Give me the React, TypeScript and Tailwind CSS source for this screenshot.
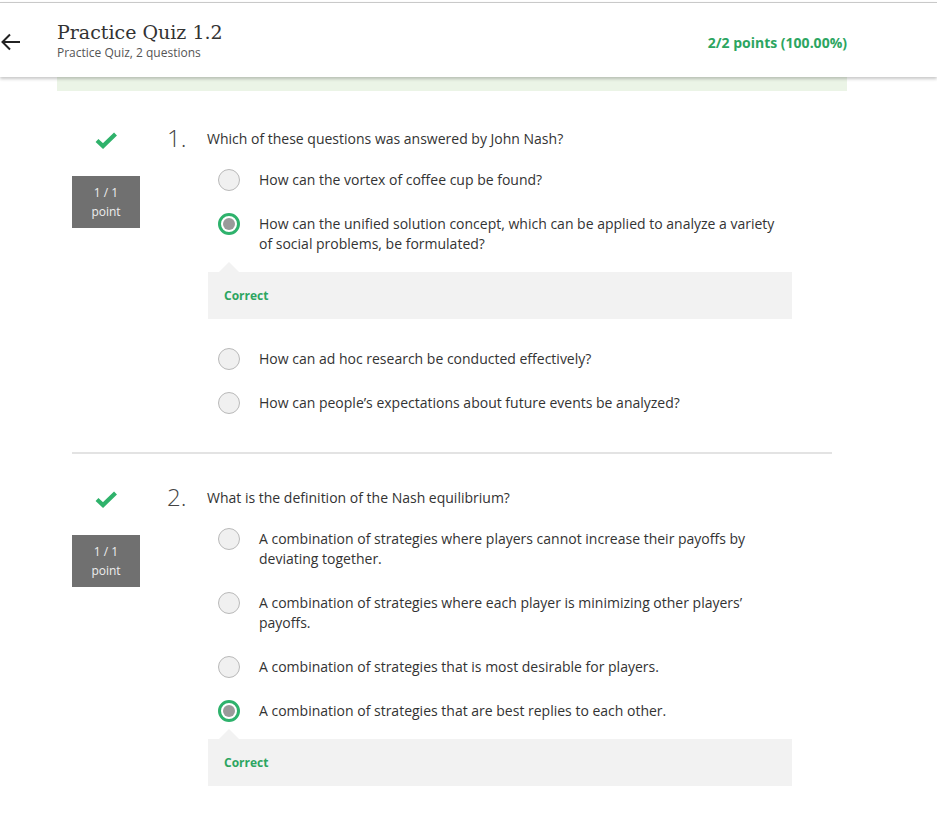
import React from 'react'

type Option = { text: string; selected?: boolean; correct?: boolean }

type Question = { num: number; title: string; options: Option[] }

const QUESTIONS: Question[] = [
  {
    num: 1,
    title: 'Which of these questions was answered by John Nash?',
    options: [
      { text: 'How can the vortex of coffee cup be found?' },
      {
        text: 'How can the unified solution concept, which can be applied to analyze a variety of social problems, be formulated?',
        selected: true,
        correct: true,
      },
      { text: 'How can ad hoc research be conducted effectively?' },
      { text: 'How can people\u2019s expectations about future events be analyzed?' },
    ],
  },
  {
    num: 2,
    title: 'What is the definition of the Nash equilibrium?',
    options: [
      { text: 'A combination of strategies where players cannot increase their payoffs by deviating together.' },
      { text: 'A combination of strategies where each player is minimizing other players\u2019 payoffs.' },
      { text: 'A combination of strategies that is most desirable for players.' },
      { text: 'A combination of strategies that are best replies to each other.', selected: true, correct: true },
    ],
  },
]

function Check() {
  return (
    <svg width="24" height="18" viewBox="0 0 24 18" className="block mx-auto">
      <path d="M3 9.5 L9 15 L21.5 3" fill="none" stroke="#2fb26b" strokeWidth="4.2" strokeLinecap="butt" strokeLinejoin="miter" />
    </svg>
  )
}

function Radio({ selected }: { selected?: boolean }) {
  if (selected) {
    return (
      <span className="-my-[1px] w-[22px] h-[22px] shrink-0 rounded-full border-[3px] border-[#2eb26c] bg-white flex items-center justify-center">
        <span className="w-[12px] h-[12px] rounded-full bg-[#9a9a9a]" />
      </span>
    )
  }
  return <span className="-my-[1px] w-[22px] h-[22px] shrink-0 rounded-full border border-[#b9b9b9] bg-[#f0f0f0]" />
}

function Feedback({ last }: { last: boolean }) {
  return (
    <div className={`relative mt-[18px] ${last ? '' : 'mb-[30px]'} ml-[1px] w-[584px] h-[47px] bg-[#f2f2f2] flex items-center pl-[16px]`}>
      <span className="absolute -top-[10px] left-[11px] w-0 h-0 border-l-[10px] border-r-[10px] border-b-[10px] border-l-transparent border-r-transparent border-b-[#f2f2f2]" />
      <span className="text-[12px] font-bold text-[#2ca561]">Correct</span>
    </div>
  )
}

function QuestionBlock({ q }: { q: Question }) {
  return (
    <div className="flex">
      <div className="w-[68px] shrink-0 pt-[4px]">
        <Check />
        <div className="mt-[27px] h-[52px] bg-[#707070] text-[#eeeeee] text-[12px] leading-[19px] flex flex-col items-center justify-center">
          <span>1 / 1</span>
          <span>point</span>
        </div>
      </div>
      <div className="ml-[27px]">
        <div className="flex items-center h-[22px]">
          <span className="w-[40px] text-[24px] font-light text-[#444] leading-[22px]">{q.num}.</span>
          <span className="text-[14px] text-[#333]">{q.title}</span>
        </div>
        <div className="mt-[21px] ml-[40px]">
          {q.options.map((o, i) => (
            <div key={i}>
              <div className={`flex items-start pl-[11px] ${i > 0 && !q.options[i - 1].correct ? 'mt-[24px]' : ''}`}>
                <Radio selected={o.selected} />
                <p className="ml-[19px] w-[530px] text-[14px] leading-[20px] text-[#333]">{o.text}</p>
              </div>
              {o.correct && <Feedback last={i === q.options.length - 1} />}
            </div>
          ))}
        </div>
      </div>
    </div>
  )
}

export default function App() {
  return (
    <div className="min-h-screen bg-white font-['Open_Sans',sans-serif] text-[#333]">
      <header className="mt-[2px] border-t border-[#c9c9c9] h-[75px] flex items-center shadow-[0_2px_3px_rgba(0,0,0,0.22)] relative z-10">
        <div className="w-[57px] shrink-0 flex items-center">
          <svg width="22" height="22" viewBox="0 0 22 22" className="mt-[4px]">
            <path d="M20 11 H2.5 M10 3.5 L2.5 11 L10 18.5" fill="none" stroke="#222" strokeWidth="2" />
          </svg>
        </div>
        <div className="flex-1 pt-[1px]">
          <h1 className="font-['DejaVu_Serif',serif] text-[19px] leading-[24px] text-[#333]">Practice Quiz 1.2</h1>
          <p className="text-[12px] leading-[18px] text-[#555]">Practice Quiz, 2 questions</p>
        </div>
        <div className="pr-[90px] pt-[4px] text-[14px] font-bold text-[#2ca561]">2/2 points (100.00%)</div>
      </header>
      <div className="ml-[57px] w-[790px] h-[14px] bg-[#ebf4e6]" />
      <main className="ml-[57px] w-[790px] px-[15px] pt-[36px] pb-[30px]">
        <QuestionBlock q={QUESTIONS[0]} />
        <div className="mt-[39px] mb-[32px] h-[2px] bg-[#e3e3e3]" />
        <QuestionBlock q={QUESTIONS[1]} />
      </main>
    </div>
  )
}
